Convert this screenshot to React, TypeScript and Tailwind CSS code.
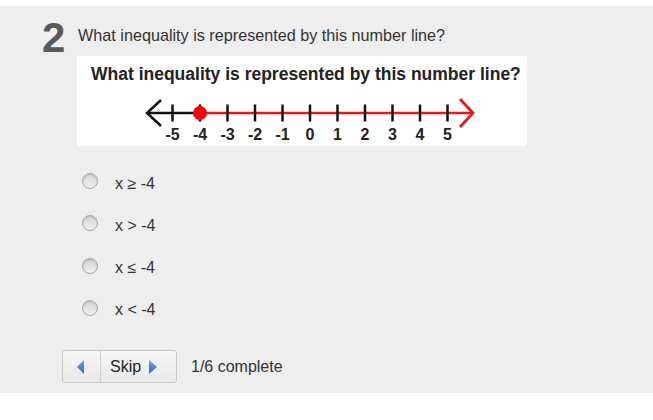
import React from "react";

const ticks = [-5, -4, -3, -2, -1, 0, 1, 2, 3, 4, 5];
const options = ["x ≥ -4", "x > -4", "x ≤ -4", "x < -4"];

function NumberLine() {
  return (
    <svg width="450" height="60" viewBox="0 0 450 60" className="block">
      <line x1="70" y1="27" x2="123" y2="27" stroke="#111" strokeWidth="2.5" />
      <polyline points="84,14 70,27 84,40" fill="none" stroke="#111" strokeWidth="2.5" />
      <line x1="123" y1="27" x2="395" y2="27" stroke="#e3191f" strokeWidth="2.5" />
      <polyline points="383,13 396,27 383,41" fill="none" stroke="#e3191f" strokeWidth="2.8" />
      {ticks.map((t, i) => (
        <line key={t} x1={95.5 + 27.5 * i} y1="18.5" x2={95.5 + 27.5 * i} y2="35.5" stroke="#111" strokeWidth="2.5" />
      ))}
      <circle cx="123" cy="27" r="7" fill="#f00" />
      {ticks.map((t, i) => (
        <text
          key={"l" + t}
          x={95.5 + 27.5 * i}
          y="54"
          textAnchor="middle"
          fontFamily="'Liberation Sans', Arial, sans-serif"
          fontWeight="700"
          fontSize="16"
          fill="#222"
        >
          {t}
        </text>
      ))}
    </svg>
  );
}

function Radio() {
  return (
    <div className="w-[16px] h-[16px] rounded-full border border-[#a9a9a9] bg-linear-to-b from-[#d2d2d2] to-[#f2f2f2] shadow-[inset_0_1px_2px_rgba(0,0,0,0.12)]" />
  );
}

export default function App() {
  return (
    <div className="bg-white min-h-[420px] pt-[6px] font-['Liberation_Sans',Arial,sans-serif]">
      <div className="bg-[#eeeeee] h-[387px] pl-[42px] pt-[11px]">
        <div className="flex items-start">
          <div className="w-[35px] text-[42px] font-bold leading-none text-[#5a5a5a]">2</div>
          <div className="flex flex-col">
            <p className="mt-[8px] pl-[1px] text-[16.2px] leading-[20px] text-[#333]">
              What inequality is represented by this number line?
            </p>
            <div className="mt-[11px] w-[450px] h-[90px] bg-white">
              <div className="pt-[6px] pl-[14px] text-[17.5px] leading-[24px] font-bold text-[#222] whitespace-nowrap">
                What inequality is represented by this number line?
              </div>
              <NumberLine />
            </div>
          </div>
        </div>
        <div className="mt-[14px] flex flex-col">
          {options.map((o) => (
            <div key={o} className="flex items-start h-[42.33px] pt-[13px]">
              <div className="ml-[40px]">
                <Radio />
              </div>
              <span className="ml-[17px] mt-[0.5px] text-[16px] leading-[20px] text-[#333]">{o}</span>
            </div>
          ))}
        </div>
        <div className="mt-[20.7px] flex items-center">
          <div className="ml-[20px] flex h-[33px] rounded-[3px] border border-[#c9c9c9] bg-linear-to-b from-[#f7f7f7] to-[#e9e9e9]">
            <div className="w-[38px] flex items-center justify-center border-r border-[#cfcfcf]">
              <svg width="8" height="14" viewBox="0 0 8 14" className="ml-[-2px]">
                <defs>
                  <linearGradient id="gl" x1="0" y1="0" x2="0" y2="1">
                    <stop offset="0" stopColor="#6fa3e8" />
                    <stop offset="1" stopColor="#2d68c4" />
                  </linearGradient>
                </defs>
                <polygon points="7,0 7,14 0,7" fill="url(#gl)" />
              </svg>
            </div>
            <div className="w-[75px] flex items-center pl-[9px]">
              <span className="text-[16px] leading-[20px] text-[#222]">Skip</span>
              <svg width="8" height="14" viewBox="0 0 8 14" className="ml-[8px]">
                <defs>
                  <linearGradient id="gr" x1="0" y1="0" x2="0" y2="1">
                    <stop offset="0" stopColor="#6fa3e8" />
                    <stop offset="1" stopColor="#2d68c4" />
                  </linearGradient>
                </defs>
                <polygon points="0,0 0,14 8,7" fill="url(#gr)" />
              </svg>
            </div>
          </div>
          <span className="ml-[14px] text-[16px] leading-[20px] text-[#333]">1/6 complete</span>
        </div>
      </div>
    </div>
  );
}
